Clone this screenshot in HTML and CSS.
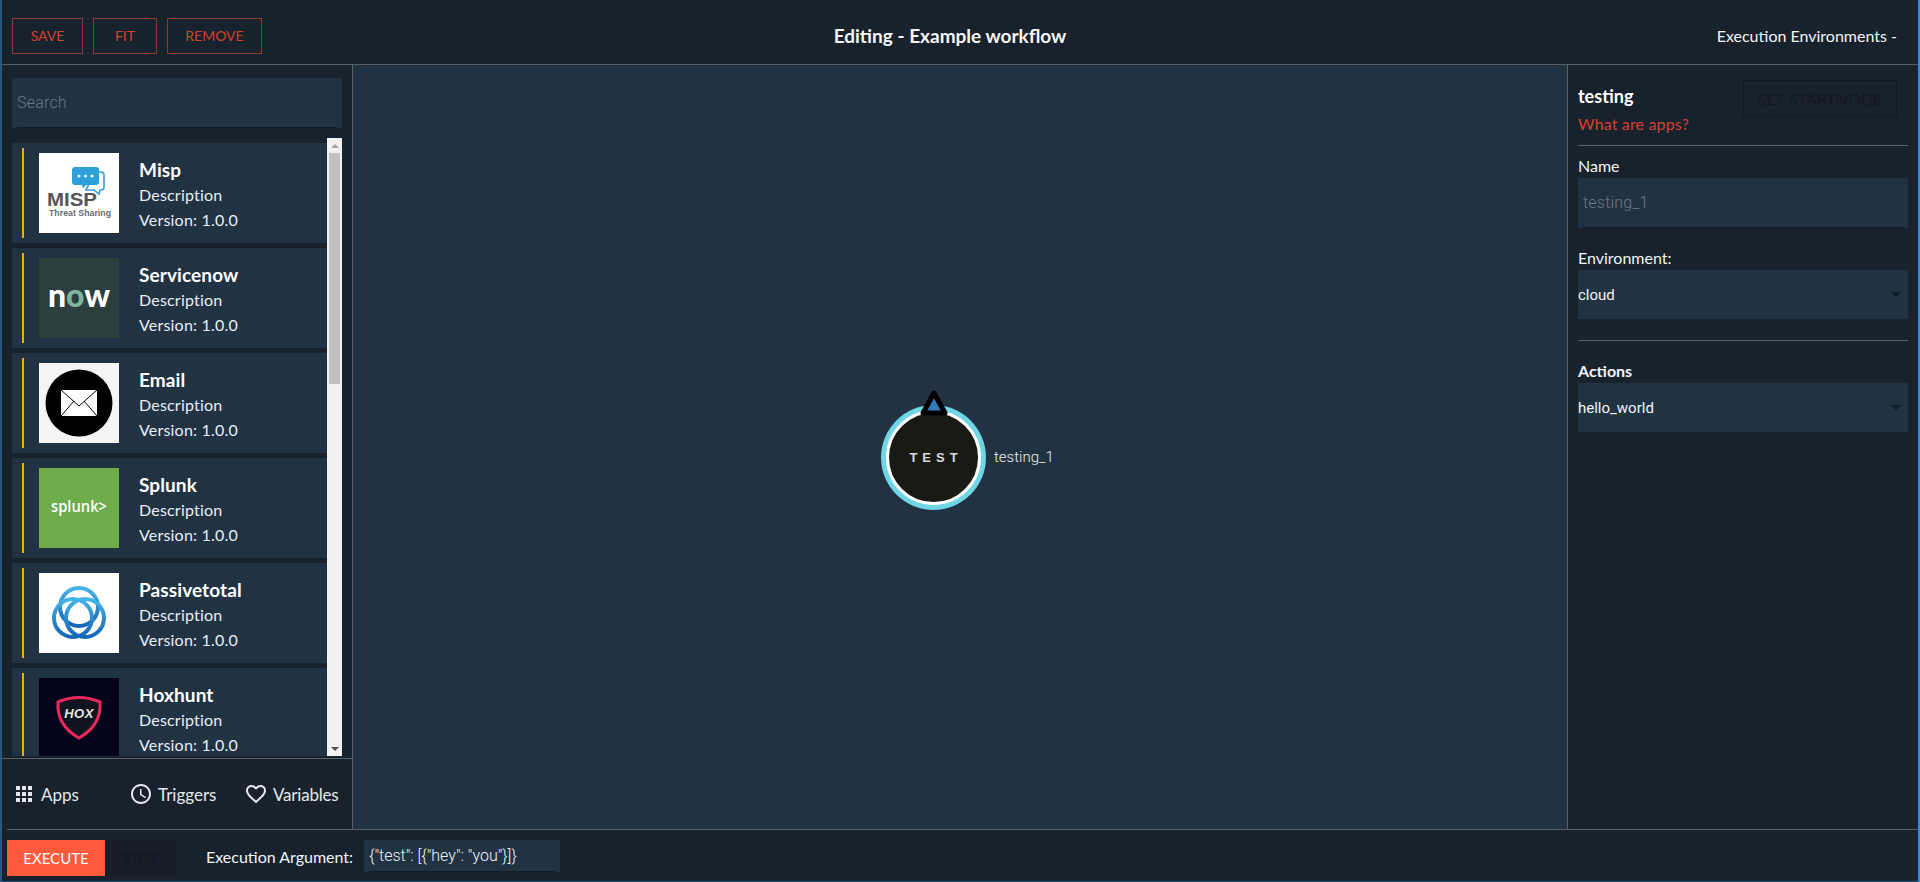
FILE: index.html
```html
<!DOCTYPE html>
<html>
<head>
    <title>Editing - Example workflow</title>
    <link rel="stylesheet" href="styles.css">
</head>
<body>
    <div class="app">
        <header class="topbar">
            <div class="top-actions">
                <button class="btn-outline btn-save">SAVE</button>
                <button class="btn-outline btn-fit">FIT</button>
                <button class="btn-outline btn-remove">REMOVE</button>
            </div>
            <div class="top-title">Editing - Example workflow</div>
            <div class="top-env">Execution Environments -</div>
        </header>

        <div class="middle">
            <aside class="sidebar">
                <div class="field search-field">
                    <input class="field-input" type="text" placeholder="Search">
                </div>
                <div class="app-list-wrap">
                    <div class="app-list">
                        <div class="app-card">
                            <div class="app-logo">
                                <svg viewBox="0 0 80 80" width="80" height="80">
                                    <rect width="80" height="80" fill="#fff"/>
                                    <path d="M56 19h6a3 3 0 0 1 3 3v12a3 3 0 0 1-3 3h-1l-1 4-5-4h-8z" fill="none" stroke="#2d9fd9" stroke-width="1.6"/>
                                    <path d="M36 14h21a3 3 0 0 1 3 3v12a3 3 0 0 1-3 3H47l-3 3.500-1-3.500h-7a3 3 0 0 1-3-3V17a3 3 0 0 1 3-3z" fill="#2d9fd9"/>
                                    <circle cx="40" cy="23" r="1.500" fill="#fff"/>
                                    <circle cx="46.500" cy="23" r="1.500" fill="#fff"/>
                                    <circle cx="53" cy="23" r="1.500" fill="#fff"/>
                                    <text x="8" y="53" class="logo-misp" textLength="50" lengthAdjust="spacingAndGlyphs">MISP</text>
                                    <text x="10" y="63" class="logo-misp-sub" textLength="62" lengthAdjust="spacingAndGlyphs">Threat Sharing</text>
                                </svg>
                            </div>
                            <div class="app-info">
                                <div class="app-name">Misp</div>
                                <div class="app-line">Description</div>
                                <div class="app-line">Version: 1.0.0</div>
                            </div>
                        </div>
                        <div class="app-card">
                            <div class="app-logo">
                                <svg viewBox="0 0 80 80" width="80" height="80">
                                    <rect width="80" height="80" fill="#2b3f3e"/>
                                    <text x="9" y="49" class="logo-now" textLength="62" lengthAdjust="spacingAndGlyphs">n<tspan fill="#7fb59f">o</tspan>w</text>
                                </svg>
                            </div>
                            <div class="app-info">
                                <div class="app-name">Servicenow</div>
                                <div class="app-line">Description</div>
                                <div class="app-line">Version: 1.0.0</div>
                            </div>
                        </div>
                        <div class="app-card">
                            <div class="app-logo">
                                <svg viewBox="0 0 80 80" width="80" height="80">
                                    <rect width="80" height="80" fill="#f5f5f5"/>
                                    <circle cx="40" cy="40" r="33.500" fill="#000"/>
                                    <rect x="22" y="27" width="36" height="26" fill="#fff"/>
                                    <path d="M22 27l18 16 18-16M22 53l13-15M58 53L45 38" fill="none" stroke="#000" stroke-width="1"/>
                                </svg>
                            </div>
                            <div class="app-info">
                                <div class="app-name">Email</div>
                                <div class="app-line">Description</div>
                                <div class="app-line">Version: 1.0.0</div>
                            </div>
                        </div>
                        <div class="app-card">
                            <div class="app-logo">
                                <svg viewBox="0 0 80 80" width="80" height="80">
                                    <rect width="80" height="80" fill="#6fac4b"/>
                                    <text x="12" y="44" class="logo-splunk" textLength="56" lengthAdjust="spacingAndGlyphs">splunk&gt;</text>
                                </svg>
                            </div>
                            <div class="app-info">
                                <div class="app-name">Splunk</div>
                                <div class="app-line">Description</div>
                                <div class="app-line">Version: 1.0.0</div>
                            </div>
                        </div>
                        <div class="app-card">
                            <div class="app-logo">
                                <svg viewBox="0 0 80 80" width="80" height="80">
                                    <defs>
                                        <linearGradient id="ringBlue" x1="0" y1="0" x2="0" y2="1">
                                            <stop offset="0" stop-color="#45b4e8"/>
                                            <stop offset="1" stop-color="#1565b5"/>
                                        </linearGradient>
                                    </defs>
                                    <rect width="80" height="80" fill="#fff"/>
                                    <g fill="none" stroke="url(#ringBlue)" stroke-width="4">
                                        <circle cx="40" cy="34" r="19"/>
                                        <circle cx="34" cy="45" r="19"/>
                                        <circle cx="46" cy="45" r="19"/>
                                    </g>
                                </svg>
                            </div>
                            <div class="app-info">
                                <div class="app-name">Passivetotal</div>
                                <div class="app-line">Description</div>
                                <div class="app-line">Version: 1.0.0</div>
                            </div>
                        </div>
                        <div class="app-card">
                            <div class="app-logo">
                                <svg viewBox="0 0 80 80" width="80" height="80">
                                    <rect width="80" height="80" fill="#04041a"/>
                                    <path d="M19 24c7-3 14-4.500 21-4.500s14 1.500 21 4.500c1 14-5 27-21 36C24 51 18 38 19 24z" fill="#10141f" stroke="#e8285c" stroke-width="3"/>
                                    <text x="40" y="40" class="logo-hox">HOX</text>
                                </svg>
                            </div>
                            <div class="app-info">
                                <div class="app-name">Hoxhunt</div>
                                <div class="app-line">Description</div>
                                <div class="app-line">Version: 1.0.0</div>
                            </div>
                        </div>
                    </div>
                    <div class="scrollbar">
                        <div class="scroll-arrow arrow-up"></div>
                        <div class="scroll-track"><div class="scroll-thumb"></div></div>
                        <div class="scroll-arrow arrow-down"></div>
                    </div>
                </div>
                <nav class="tabs">
                    <div class="tab tab-apps">
                        <svg viewBox="0 0 24 24" width="24" height="24"><path d="M4 8h4V4H4v4zm6 12h4v-4h-4v4zm-6 0h4v-4H4v4zm0-6h4v-4H4v4zm6 0h4v-4h-4v4zm6-10v4h4V4h-4zm-6 4h4V4h-4v4zm6 6h4v-4h-4v4zm0 6h4v-4h-4v4z"/></svg>
                        <span>Apps</span>
                    </div>
                    <div class="tab tab-triggers">
                        <svg viewBox="0 0 24 24" width="24" height="24"><path d="M11.990 2C6.470 2 2 6.480 2 12s4.470 10 9.990 10C17.520 22 22 17.520 22 12S17.520 2 11.990 2zM12 20c-4.420 0-8-3.580-8-8s3.580-8 8-8 8 3.580 8 8-3.580 8-8 8zm.5-13H11v6l5.250 3.150.75-1.230-4.500-2.670z"/></svg>
                        <span>Triggers</span>
                    </div>
                    <div class="tab tab-variables">
                        <svg viewBox="0 0 24 24" width="24" height="24"><path d="M16.500 3c-1.740 0-3.410.81-4.500 2.090C10.910 3.810 9.240 3 7.500 3 4.420 3 2 5.420 2 8.500c0 3.780 3.400 6.860 8.550 11.540L12 21.350l1.450-1.320C18.600 15.360 22 12.280 22 8.500 22 5.420 19.580 3 16.500 3zm-4.400 15.550l-.1.100-.1-.1C7.140 14.240 4 11.390 4 8.500 4 6.500 5.500 5 7.500 5c1.540 0 3.040.99 3.570 2.360h1.870C13.460 5.990 14.960 5 16.500 5c2 0 3.500 1.500 3.500 3.500 0 2.890-3.140 5.740-7.900 10.050z"/></svg>
                        <span>Variables</span>
                    </div>
                </nav>
            </aside>

            <main class="canvas">
                <div class="node">
                    <div class="node-circle"><span class="node-text">TEST</span></div>
                    <svg class="node-marker" viewBox="0 0 30 28" width="30" height="28"><path d="M15 4L26 24H4z" fill="#337ab7" stroke="#000" stroke-width="5" stroke-linejoin="round"/></svg>
                    <span class="node-label">testing_1</span>
                </div>
            </main>

            <aside class="details">
                <div class="details-head">
                    <div class="details-title">
                        <div class="details-name">testing</div>
                        <a class="details-link">What are apps?</a>
                    </div>
                    <button class="btn-disabled">SET STARTNODE</button>
                </div>
                <div class="divider"></div>
                <div class="field-label label-name">Name</div>
                <div class="field name-field">
                    <input class="field-input" type="text" value="testing_1">
                </div>
                <div class="field-label label-env">Environment:</div>
                <div class="select-box">cloud<span class="select-caret"></span></div>
                <div class="divider divider-env"></div>
                <div class="field-label label-actions">Actions</div>
                <div class="select-box">hello_world<span class="select-caret"></span></div>
            </aside>
        </div>

        <footer class="runbar">
            <button class="btn-execute">EXECUTE</button>
            <button class="btn-stop">STOP</button>
            <span class="arg-label">Execution Argument:</span>
            <div class="field arg-field">
                <input class="field-input" type="text" value='{"test": [{"hey": "you"}]}'>
            </div>
        </footer>
    </div>
</body>
</html>
```

FILE: styles.css
```css
/* workflow editor */
* {
    box-sizing: border-box;
}

body {
    margin: 0;
    padding: 0;
    font-family: "Lato", "Liberation Sans", sans-serif;
    color: #f2f4f6;
    background: #18222c;
}

.app {
    height: 882px;
    display: flex;
    flex-direction: column;
    border-left: 2px solid #29567f;
    border-right: 2px solid #2c8fe0;
    border-bottom: 1px solid #29567f;
    background: #18222c;
}

button {
    font-family: inherit;
    cursor: pointer;
}

/* top bar */
.topbar {
    height: 65px;
    flex-shrink: 0;
    display: flex;
    align-items: center;
    justify-content: space-between;
    padding: 7px 21px 0 10px;
    border-bottom: 1px solid #5b6066;
}

.top-actions {
    display: flex;
    gap: 10px;
    width: 400px;
}

.btn-outline {
    height: 36px;
    padding: 0;
    background: transparent;
    border: 1px solid #8c3a2f;
    color: #cf4431;
    font-size: 14px;
    border-radius: 0;
}

.btn-save {
    width: 71px;
}

.btn-fit {
    width: 64px;
}

.btn-remove {
    width: 95px;
}

.top-title {
    font-size: 19px;
    font-weight: 700;
    color: #f7f7f7;
}

.top-env {
    width: 409px;
    text-align: right;
    font-size: 16px;
}

/* main area */
.middle {
    height: 764px;
    flex-shrink: 0;
    display: flex;
}

.sidebar {
    width: 351px;
    flex-shrink: 0;
    display: flex;
    flex-direction: column;
    padding-top: 13px;
    border-right: 1px solid #5b6066;
}

.field {
    background: #213243;
    padding: 0 5px;
    height: 50px;
}

.field-input {
    display: block;
    width: 100%;
    height: 50px;
    padding: 0;
    border: none;
    border-bottom: 1px solid #131b23;
    background: transparent;
    outline: none;
    font-family: "Roboto", sans-serif;
    font-size: 16px;
    font-weight: 300;
    letter-spacing: 0.2px;
    color: #f2f4f6;
}

.field-input::placeholder {
    color: #6f7883;
    opacity: 1;
}

.search-field {
    margin: 0 10px;
}

.app-list-wrap {
    height: 618px;
    flex-shrink: 0;
    margin: 10px 10px 2px;
    display: flex;
}

.app-list {
    width: 315px;
    overflow: hidden;
}

.app-card {
    height: 100px;
    margin-top: 5px;
    display: flex;
    align-items: center;
    padding-left: 10px;
    background: #213243;
}

.app-card::before {
    content: "";
    width: 2px;
    height: 90px;
    flex-shrink: 0;
    margin-right: 15px;
    background: #f6a800;
}

.app-logo {
    width: 80px;
    height: 80px;
    flex-shrink: 0;
    margin-right: 20px;
}

.app-logo svg {
    display: block;
}

.logo-misp {
    font-family: "Liberation Sans", sans-serif;
    font-size: 19px;
    font-weight: 700;
    fill: #55565a;
}

.logo-misp-sub {
    font-family: "Liberation Sans", sans-serif;
    font-size: 8.5px;
    font-weight: 700;
    fill: #6b6c70;
}

.logo-now {
    font-family: "Lato", sans-serif;
    font-size: 32px;
    font-weight: 900;
    fill: #fff;
}

.logo-splunk {
    font-family: "Open Sans", sans-serif;
    font-size: 17px;
    font-weight: 600;
    fill: #fff;
}

.logo-hox {
    font-family: "Liberation Sans", sans-serif;
    font-size: 13px;
    font-weight: 700;
    font-style: italic;
    letter-spacing: 0.5px;
    text-anchor: middle;
    fill: #e6e6e6;
}

.app-info {
    padding-top: 2px;
}

.app-name {
    font-size: 19px;
    font-weight: 700;
    line-height: 25px;
    letter-spacing: 0.1px;
    color: #fff;
}

.app-line {
    font-size: 16px;
    line-height: 25px;
    letter-spacing: 0.2px;
    color: #e8eef4;
}

/* drawn to look like the browser one */
.scrollbar {
    width: 15px;
    display: flex;
    flex-direction: column;
    background: #f1f1f1;
}

.scroll-arrow {
    height: 15px;
    flex-shrink: 0;
    display: flex;
    align-items: center;
    justify-content: center;
}

.arrow-up::before,
.arrow-down::before {
    content: "";
    border-left: 4px solid transparent;
    border-right: 4px solid transparent;
}

.arrow-up::before {
    border-bottom: 4px solid #a3a3a3;
}

.arrow-down::before {
    border-top: 4px solid #505050;
}

.scroll-track {
    flex: 1;
    padding: 0 2px;
}

.scroll-thumb {
    height: 231px;
    background: #c1c1c1;
}

.tabs {
    flex: 1;
    display: flex;
    align-items: center;
    border-top: 1px solid #5b6066;
    font-size: 17px;
    color: #e4e9ee;
}

.tab {
    display: flex;
    align-items: center;
    gap: 5px;
}

.tab svg {
    fill: #e4e9ee;
    display: block;
}

.tab-apps {
    margin-left: 10px;
    width: 117px;
}

.tab-triggers {
    width: 115px;
}

.tab-variables span {
    letter-spacing: -0.2px;
}

/* canvas */
.canvas {
    flex: 1;
    position: relative;
    background: #213243;
    border-right: 1px solid #5b6066;
}

.node {
    position: absolute;
    left: 533px;
    top: 345px;
    width: 95px;
    height: 95px;
}

.node-circle {
    width: 95px;
    height: 95px;
    display: flex;
    align-items: center;
    justify-content: center;
    border-radius: 50%;
    background: #1a1a15;
    border: 3px solid #fff;
    box-shadow: 0 0 0 5px #6fd6e6;
}

.node-text {
    font-family: "Liberation Sans", sans-serif;
    font-size: 13px;
    font-weight: 700;
    letter-spacing: 5px;
    margin-right: -5px;
    color: #d8d8d8;
}

.node-marker {
    position: absolute;
    left: 33px;
    top: -21px;
}

.node-label {
    position: absolute;
    left: 108px;
    top: 38px;
    font-family: "Roboto", sans-serif;
    font-size: 15px;
    font-weight: 300;
    color: #eceff2;
    white-space: nowrap;
}

/* right panel */
.details {
    width: 350px;
    flex-shrink: 0;
    padding: 0 10px;
}

.details-head {
    display: flex;
    justify-content: space-between;
    height: 80px;
    padding-top: 15px;
}

.details-title {
    padding-top: 4px;
}

.details-name {
    font-size: 18px;
    font-weight: 700;
    line-height: 24px;
    color: #fff;
}

.details-link {
    display: block;
    margin-top: 5px;
    font-size: 16px;
    line-height: 22px;
    letter-spacing: 0.15px;
    color: #d5412e;
}

.btn-disabled {
    width: 154px;
    height: 36px;
    margin-right: 11px;
    padding: 0;
    background: transparent;
    border: 1px solid #111920;
    color: #111920;
    font-size: 16px;
    border-radius: 0;
}

.divider {
    height: 1px;
    background: #5b6066;
}

.divider-env {
    margin-top: 21px;
}

.field-label {
    font-size: 16px;
    line-height: 20px;
}

.label-name {
    margin-top: 10px;
    margin-bottom: 2px;
}

.label-env {
    margin-top: 20px;
    margin-bottom: 2px;
}

.label-actions {
    margin-top: 20px;
    margin-bottom: 2px;
    font-weight: 700;
}

.name-field .field-input {
    color: #6f7883;
}

.select-box {
    height: 49px;
    display: flex;
    align-items: center;
    justify-content: space-between;
    padding-right: 7px;
    background: #213243;
    font-family: "Roboto", sans-serif;
    font-size: 15px;
    color: #f2f4f6;
}

.select-caret {
    border-left: 5px solid transparent;
    border-right: 5px solid transparent;
    border-top: 5px solid #131b23;
}

/* bottom bar */
.runbar {
    flex: 1;
    display: flex;
    align-items: flex-start;
    margin-left: 5px;
    padding-top: 10px;
    border-top: 1px solid #5b6066;
}

.btn-execute {
    width: 98px;
    height: 36px;
    padding: 0;
    border: none;
    background: #ff5a3c;
    color: #fff;
    font-size: 15px;
}

.btn-stop {
    width: 71px;
    height: 36px;
    padding: 0;
    border: none;
    background: #161f28;
    color: #111920;
    font-size: 15px;
}

.arg-label {
    margin-left: 30px;
    font-size: 16px;
    line-height: 33px;
}

.arg-field {
    width: 196px;
    height: 32px;
    margin-left: 11px;
}

.arg-field .field-input {
    height: 32px;
    font-size: 16px;
    letter-spacing: 0;
}
```
